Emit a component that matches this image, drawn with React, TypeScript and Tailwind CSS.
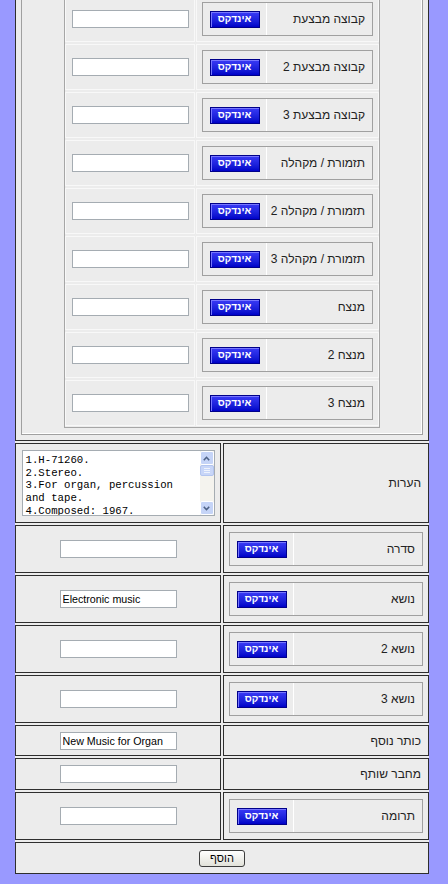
import type { ReactNode } from "react";

const performerRows = [
  "קבוצה מבצעת",
  "קבוצה מבצעת 2",
  "קבוצה מבצעת 3",
  "תזמורת / מקהלה",
  "תזמורת / מקהלה 2",
  "תזמורת / מקהלה 3",
  "מנצח",
  "מנצח 2",
  "מנצח 3",
];

const notes = `1.H-71260.
2.Stereo.
3.For organ, percussion
and tape.
4.Composed: 1967.
5.Score available.`;

const IndexButton = () => (
  <button
    type="button"
    className="h-[17px] w-[50px] border border-[#00008a] bg-linear-to-b from-[#3a3af6] to-[#0000c8] text-[10px] font-bold leading-none text-white shadow-[inset_1px_1px_0_#7777ff]"
  >
    אינדקס
  </button>
);

const TextInput = ({ value = "" }: { value?: string }) => (
  <input
    dir="ltr"
    type="text"
    defaultValue={value}
    className="h-[18px] w-[117px] border border-[#a5acb2] bg-white px-[2px] text-left text-[10.7px] text-black outline-none"
  />
);

const LabelBox = ({ label }: { label: string }) => (
  <div className="flex h-[34px] w-full border border-[#a0a0a0] bg-[#ececec]">
    <div className="flex flex-1 items-center pr-[7px] text-[12px] text-[#222]">
      {label}
    </div>
    <div className="flex w-[64px] items-center justify-center border-r border-white">
      <IndexButton />
    </div>
  </div>
);

const Cell = ({
  children,
  className = "",
}: {
  children: ReactNode;
  className?: string;
}) => (
  <div className={`flex items-center border border-[#2e2e2e] ${className}`}>
    {children}
  </div>
);

const ScrollArrow = ({ up }: { up?: boolean }) => (
  <div className="flex h-[14px] w-full items-center justify-center rounded-[2px] border border-white bg-[#c5d4f7]">
    <svg width="7" height="5" viewBox="0 0 7 5">
      <path
        d={up ? "M0.8 4.2 L3.5 1.3 L6.2 4.2" : "M0.8 0.8 L3.5 3.7 L6.2 0.8"}
        fill="none"
        stroke="#4d6185"
        strokeWidth="1.6"
      />
    </svg>
  </div>
);

const NotesField = () => (
  <div dir="ltr" className="flex h-[66px] w-[193px] border border-[#a5acb2] bg-white">
    <textarea
      readOnly
      defaultValue={notes}
      className="h-full flex-1 resize-none overflow-hidden bg-transparent pl-[3px] pt-[3px] font-['Liberation_Mono',monospace] text-[10.7px] leading-[12.7px] text-black outline-none"
    />
    <div className="flex w-[14px] flex-col bg-[#f4f3ee]">
      <ScrollArrow up />
      <div className="flex h-[11px] flex-col items-center justify-center gap-px rounded-[2px] border border-[#b3c5ef] bg-[#c8d6f8]">
        <span className="h-px w-[6px] bg-[#eef3fd]" />
        <span className="h-px w-[6px] bg-[#eef3fd]" />
        <span className="h-px w-[6px] bg-[#eef3fd]" />
      </div>
      <div className="flex-1" />
      <ScrollArrow />
    </div>
  </div>
);

const bottomRows: {
  label: string;
  index: boolean;
  value?: string;
  height: string;
}[] = [
  { label: "סדרה", index: true, height: "h-[48px]" },
  { label: "נושא", index: true, value: "Electronic music", height: "h-[48px]" },
  { label: "נושא 2", index: true, height: "h-[48px]" },
  { label: "נושא 3", index: true, height: "h-[48px]" },
  { label: "כותר נוסף", index: false, value: "New Music for Organ", height: "h-[31px]" },
  { label: "מחבר שותף", index: false, height: "h-[32px]" },
  { label: "תרומה", index: true, height: "h-[48px]" },
];

export default function App() {
  return (
    <div className="flow-root min-h-screen bg-[#9999ff] font-['Liberation_Sans',Arial,sans-serif] text-[12px]">
      <div
        dir="rtl"
        className="-mt-[19px] ml-[15px] grid w-[414px] grid-cols-2 gap-[2px] bg-[#ececec]"
      >
        <div className="col-span-2 border border-[#2e2e2e] p-[5px]">
          <div className="border border-[#a0a0a0] py-[6px] shadow-[inset_-1px_-1px_0_#ffffff]">
            <div className="mx-auto grid w-[316px] grid-cols-[183px_130px] gap-x-px gap-y-[2px] border border-[#a6a6a6] py-px">
              {performerRows.map((label) => (
                <div key={label} className="contents">
                  <div className="flex h-[46px] items-center justify-center border border-[#f8f8f8] px-[5px]">
                    <LabelBox label={label} />
                  </div>
                  <div className="flex h-[46px] items-center justify-center border border-[#f8f8f8]">
                    <TextInput />
                  </div>
                </div>
              ))}
            </div>
          </div>
        </div>

        <Cell className="h-[80px] justify-start pr-[7px] text-[#222]">הערות</Cell>
        <Cell className="h-[80px] justify-center">
          <NotesField />
        </Cell>

        {bottomRows.map((row) => (
          <div key={row.label} className="contents">
            {row.index ? (
              <Cell className={`${row.height} px-[5px]`}>
                <LabelBox label={row.label} />
              </Cell>
            ) : (
              <Cell className={`${row.height} justify-start pr-[7px] text-[#222]`}>
                {row.label}
              </Cell>
            )}
            <Cell className={`${row.height} justify-center`}>
              <TextInput value={row.value} />
            </Cell>
          </div>
        ))}

        <Cell className="col-span-2 h-[32px] justify-center">
          <button
            type="button"
            className="h-[17px] w-[46px] rounded-[3px] border border-[#3d3d3d] bg-linear-to-b from-white to-[#e2e2da] text-[11px] leading-none text-black"
          >
            הוסף
          </button>
        </Cell>
      </div>
    </div>
  );
}
